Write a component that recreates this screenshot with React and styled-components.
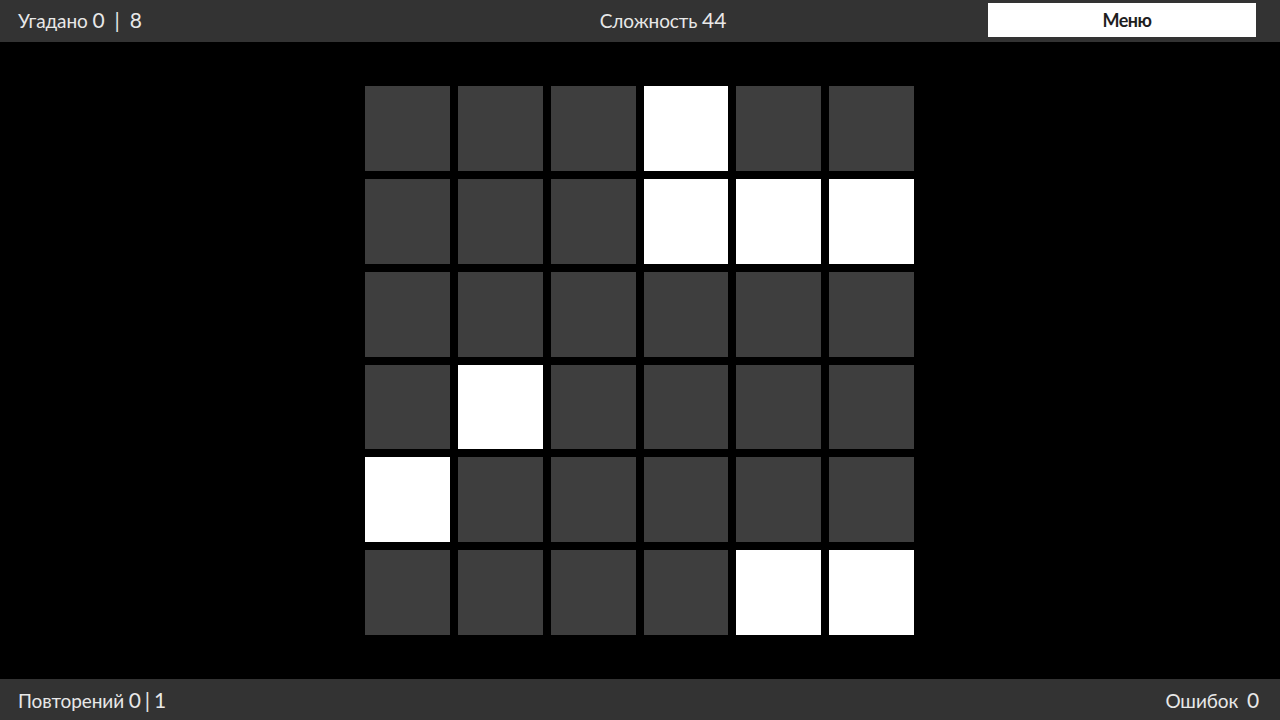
import React from "react";
import styled, { createGlobalStyle } from "styled-components";

const Global = createGlobalStyle`
  html, body { margin: 0; padding: 0; background: #000; }
  body { font-family: "Lato", "Noto Sans", sans-serif; }
  #root { height: 720px; }
`;

const Page = styled.div`
  width: 1280px;
  height: 720px;
  display: flex;
  flex-direction: column;
  background: #000;
  color: #e8e8e8;
`;

const Bar = styled.div`
  box-sizing: border-box;
  height: ${(p) => p.$h}px;
  flex: none;
  background: #333333;
  display: grid;
  grid-template-columns: ${(p) => p.$cols};
  align-items: center;
  padding: 0 ${(p) => p.$pr}px ${(p) => p.$pb || 0}px 18px;
  font-size: 19px;
  letter-spacing: -0.1px;
`;

const Label = styled.span`
  justify-self: ${(p) => p.$align || "start"};
  white-space: nowrap;
  margin-left: ${(p) => p.$shift || 0}px;
`;

const Num = styled.span`
  font-size: 21px;
  margin-left: ${(p) => p.$ml || 0}px;
`;

const Sep = styled.span`
  display: inline-block;
  margin: 0 ${(p) => p.$gap || 8}px;
`;

const MenuButton = styled.button`
  justify-self: end;
  width: 268px;
  height: 34px;
  border: none;
  background: #ffffff;
  color: #1e1e1e;
  font-family: "Lato", "Noto Sans", sans-serif;
  font-size: 18px;
  font-weight: 700;
  letter-spacing: -0.5px;
  padding: 0 0 0 10px;
  margin-top: 2px;
`;

const Main = styled.div`
  flex: 1;
  display: flex;
  align-items: center;
  justify-content: center;
  padding-right: 1px;
`;

const Board = styled.div`
  width: 549px;
  height: 549px;
  display: grid;
  grid-template-columns: repeat(6, 1fr);
  grid-template-rows: repeat(6, 1fr);
  gap: 8px;
`;

const Tile = styled.div`
  background: ${(p) => (p.$on ? "#ffffff" : "#3e3e3e")};
`;

const lit = new Set(["0-3", "1-3", "1-4", "1-5", "3-1", "4-0", "5-4", "5-5"]);

export default function App() {
  const tiles = [];
  for (let r = 0; r < 6; r++)
    for (let c = 0; c < 6; c++)
      tiles.push(<Tile key={`${r}-${c}`} $on={lit.has(`${r}-${c}`)} />);
  return (
    <>
      <Global />
      <Page>
        <Bar $h={42} $cols="1fr auto 1fr" $pr={24} $pb={4}>
          <Label>
            Угадано <Num>0<Sep $gap={10}>|</Sep>8</Num>
          </Label>
          <Label $align="center" $shift={52}>
            Сложность <Num>44</Num>
          </Label>
          <MenuButton>Меню</MenuButton>
        </Bar>
        <Main>
          <Board>{tiles}</Board>
        </Main>
        <Bar $h={41} $cols="1fr 1fr" $pr={21}>
          <Label>
            Повторений <Num>0<Sep $gap={4}>|</Sep>1</Num>
          </Label>
          <Label $align="end">
            Ошибок <Num $ml={4}>0</Num>
          </Label>
        </Bar>
      </Page>
    </>
  );
}
